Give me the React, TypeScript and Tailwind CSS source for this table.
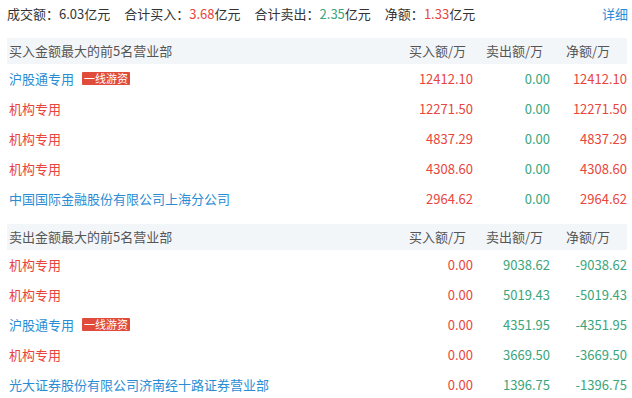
import React from "react";

const RED = "text-[#e8453c]";
const GREEN = "text-[#3aa57c]";
const BLUE = "text-[#2a8dd4]";

type Row = { name: string; badge?: boolean; buy: string; sell: string; net: string; inst?: boolean };

const buyRows: Row[] = [
  { name: "沪股通专用", badge: true, buy: "12412.10", sell: "0.00", net: "12412.10" },
  { name: "机构专用", inst: true, buy: "12271.50", sell: "0.00", net: "12271.50" },
  { name: "机构专用", inst: true, buy: "4837.29", sell: "0.00", net: "4837.29" },
  { name: "机构专用", inst: true, buy: "4308.60", sell: "0.00", net: "4308.60" },
  { name: "中国国际金融股份有限公司上海分公司", buy: "2964.62", sell: "0.00", net: "2964.62" },
];

const sellRows: Row[] = [
  { name: "机构专用", inst: true, buy: "0.00", sell: "9038.62", net: "-9038.62" },
  { name: "机构专用", inst: true, buy: "0.00", sell: "5019.43", net: "-5019.43" },
  { name: "沪股通专用", badge: true, buy: "0.00", sell: "4351.95", net: "-4351.95" },
  { name: "机构专用", inst: true, buy: "0.00", sell: "3669.50", net: "-3669.50" },
  { name: "光大证券股份有限公司济南经十路证券营业部", buy: "0.00", sell: "1396.75", net: "-1396.75" },
];

function Header({ title }: { title: string }) {
  return (
    <div className="flex items-center h-[26px] bg-[#f3f6f9] text-[#555] pl-[2px]">
      <div className="flex-1">{title}</div>
      <div className="w-[77px] text-right pr-[7px]">买入额/万</div>
      <div className="w-[77px] text-right pr-[7px]">卖出额/万</div>
      <div className="w-[77px] text-right pr-[17px]">净额/万</div>
    </div>
  );
}

function TableRow({ r, sell }: { r: Row; sell?: boolean }) {
  return (
    <div className="flex items-center h-[30px] pl-[2px] pb-[1px]">
      <div className={`flex-1 flex items-center ${r.inst ? RED : BLUE}`}>
        <span>{r.name}</span>
        {r.badge && (
          <span className="ml-[8px] h-[13px] px-[2px] bg-[#e04b3b] text-white text-[11px] leading-[13px] rounded-[1px]">
            一线游资
          </span>
        )}
      </div>
      <div className={`w-[77px] text-right ${RED}`}>{r.buy}</div>
      <div className={`w-[77px] text-right ${GREEN}`}>{r.sell}</div>
      <div className={`w-[77px] text-right ${sell ? GREEN : RED}`}>{r.net}</div>
    </div>
  );
}

export default function App() {
  return (
    <div
      className="w-[632px] h-[398px] bg-white pl-[7px] pr-[5px] text-[13px] text-[#333] overflow-hidden"
      style={{ fontFamily: '"Microsoft YaHei", "Noto Sans CJK SC", sans-serif' }}
    >
      <div className="flex items-center h-[28px]">
        <span>成交额：6.03亿元</span>
        <span className="ml-[14px]">
          合计买入：<span className={RED}>3.68</span>亿元
        </span>
        <span className="ml-[14px]">
          合计卖出：<span className={GREEN}>2.35</span>亿元
        </span>
        <span className="ml-[14px]">
          净额：<span className={RED}>1.33</span>亿元
        </span>
        <span className={`ml-auto mr-[-1px] ${BLUE}`}>详细</span>
      </div>
      <div className="mt-[10px]">
        <Header title="买入金额最大的前5名营业部" />
        {buyRows.map((r, i) => (
          <TableRow key={i} r={r} />
        ))}
      </div>
      <div className="mt-[10px]">
        <Header title="卖出金额最大的前5名营业部" />
        {sellRows.map((r, i) => (
          <TableRow key={i} r={r} sell />
        ))}
      </div>
    </div>
  );
}
